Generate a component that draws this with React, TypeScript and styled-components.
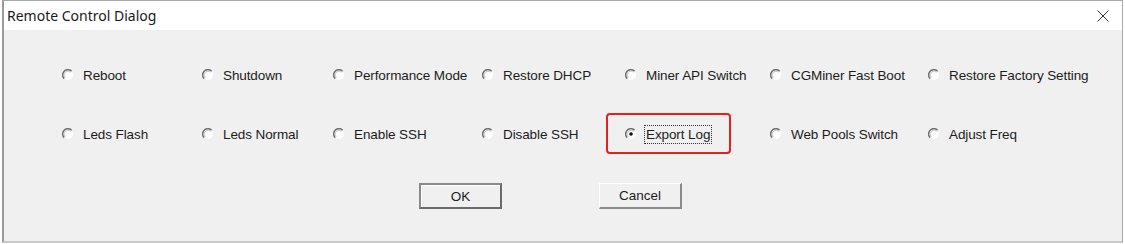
import React, { useState } from "react";
import styled, { createGlobalStyle } from "styled-components";

const GlobalStyle = createGlobalStyle`
  html, body {
    margin: 0;
    padding: 0;
    background: #ffffff;
  }
  #root {
    width: 1125px;
    height: 244px;
  }
`;

const Dialog = styled.div`
  box-sizing: border-box;
  margin-left: 2px;
  width: 1121px;
  height: 243px;
  border: 1px solid #a8a8a8;
  border-left: 2px solid #9a9a9a;
  border-bottom: 2px solid #c8c8c8;
  display: flex;
  flex-direction: column;
  background: #f0f0f0;
`;

const TitleBar = styled.div`
  height: 29px;
  background: #ffffff;
  display: flex;
  align-items: center;
  justify-content: space-between;
  padding: 0 12px 0 3px;
  font-family: "Noto Sans", "Open Sans", sans-serif;
  font-size: 14px;
  color: #1a1a1a;
`;

const Close = styled.button`
  border: none;
  background: transparent;
  padding: 0;
  width: 14px;
  height: 14px;
  display: flex;
  align-items: center;
  justify-content: center;
`;

const Body = styled.div`
  flex: 1;
  padding: 39px 0 0 58px;
  font-family: "Liberation Sans", Arial, sans-serif;
  font-size: 13.5px;
  color: #1c1c1c;
`;

const OptionGrid = styled.div`
  display: grid;
  grid-template-columns: 140px 131px 149px 143px 145px 158px auto;
  row-gap: 47px;
`;

const Option = styled.label`
  position: relative;
  display: flex;
  align-items: center;
  gap: 8px;
  height: 12px;
  white-space: nowrap;
  cursor: default;
  letter-spacing: -0.1px;
`;

const Highlight = styled.span`
  position: absolute;
  box-sizing: border-box;
  left: -19px;
  top: -15px;
  width: 125px;
  height: 41px;
  border: 2.5px solid #e3211e;
  border-radius: 4px;
`;

const Label = styled.span<{ $focus?: boolean }>`
  padding: 1px 1px;
  outline: ${(p) => (p.$focus ? "1px dotted #333" : "none")};
`;

const Buttons = styled.div`
  display: flex;
  gap: 97px;
  margin: 43px 0 0 357px;
`;

const Button = styled.button<{ $default?: boolean }>`
  box-sizing: border-box;
  width: 83px;
  height: 26px;
  font-family: "Liberation Sans", Arial, sans-serif;
  font-size: 13.5px;
  color: #1c1c1c;
  background: #f0f0f0;
  padding: 0;
  border-style: solid;
  border-width: ${(p) => (p.$default ? "2px" : "1px 2px 2px 1px")};
  border-color: ${(p) =>
    p.$default ? "#8a8a8a #6a6a6a #6a6a6a #8a8a8a" : "#ffffff #8a8a8a #8a8a8a #ffffff"};
  box-shadow: ${(p) => (p.$default ? "inset 1px 1px 0 #ffffff" : "none")};
`;

const RadioMark = ({ checked }: { checked?: boolean }) => (
  <svg width="12" height="12" viewBox="0 0 12 12">
    <circle cx="6" cy="6" r="5" fill="#ffffff" />
    <path d="M2.2 9.6 A5 5 0 0 1 9.6 2.2" fill="none" stroke="#6e6e6e" strokeWidth="1.5" />
    <path d="M3.3 8.6 A3.6 3.6 0 0 1 8.6 3.3" fill="none" stroke="#c4c4c4" strokeWidth="1" />
    {checked && <circle cx="6" cy="6" r="1.8" fill="#111" />}
  </svg>
);

const options = [
  "Reboot",
  "Shutdown",
  "Performance Mode",
  "Restore DHCP",
  "Miner API Switch",
  "CGMiner Fast Boot",
  "Restore Factory Setting",
  "Leds Flash",
  "Leds Normal",
  "Enable SSH",
  "Disable SSH",
  "Export Log",
  "Web Pools Switch",
  "Adjust Freq",
];

export default function App() {
  const [selected, setSelected] = useState("Export Log");

  return (
    <>
      <GlobalStyle />
      <Dialog>
        <TitleBar>
          <span>Remote Control Dialog</span>
          <Close aria-label="Close">
            <svg width="12" height="12" viewBox="0 0 12 12">
              <path d="M0.5 0.5 L11.5 11.5 M11.5 0.5 L0.5 11.5" stroke="#333" strokeWidth="1" />
            </svg>
          </Close>
        </TitleBar>
        <Body>
          <OptionGrid>
            {options.map((o) => (
              <Option key={o} onClick={() => setSelected(o)}>
                {o === "Export Log" && <Highlight />}
                <RadioMark checked={selected === o} />
                <Label $focus={selected === o}>{o}</Label>
              </Option>
            ))}
          </OptionGrid>
          <Buttons>
            <Button $default>OK</Button>
            <Button>Cancel</Button>
          </Buttons>
        </Body>
      </Dialog>
    </>
  );
}
